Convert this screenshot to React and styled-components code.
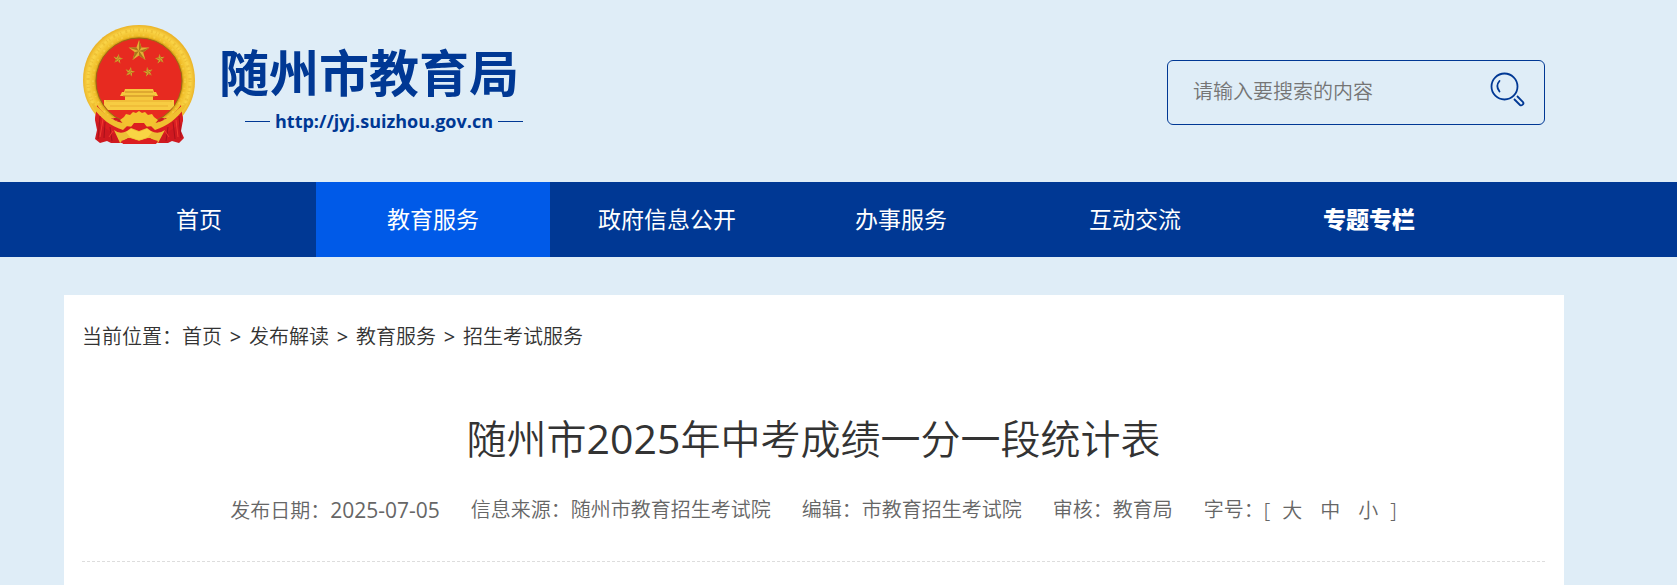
import React from "react";
import styled, { createGlobalStyle } from "styled-components";

const navy = "#003894";

const GlobalStyle = createGlobalStyle`
  * { box-sizing: border-box; }
  body {
    margin: 0;
    background: #dfedf7;
    color: #333;
    font-family: "Noto Sans", "Noto Sans CJK SC", sans-serif;
    font-size: 20px;
    line-height: 30px;
  }
  #root { min-height: 100vh; display: flex; flex-direction: column; }
  a { color: inherit; text-decoration: none; }
`;

const Page = styled.div`
  flex: 1;
  display: flex;
  flex-direction: column;
`;

const Container = styled.div`
  width: 100%;
  max-width: 1500px;
  margin: 0 auto;
  padding: 0 19px 0 18px;
`;

const Band = styled.div`
  padding-right: 49px;
  background: ${(p) => p.$fill || "transparent"};
`;

const HeaderRow = styled(Container)`
  height: 182px;
  display: flex;
  align-items: flex-start;
  justify-content: space-between;
`;

const Brand = styled.a`
  display: flex;
  gap: 22px;
  padding-top: 25px;
  color: ${navy};
`;

const BrandText = styled.div`
  padding-top: 18px;
`;

const SiteName = styled.div`
  font-size: 50px;
  font-weight: 700;
  line-height: 60px;
  white-space: nowrap;
`;

const SiteUrl = styled.div`
  display: flex;
  align-items: center;
  gap: 5px;
  padding-left: 26px;
  font-family: "Open Sans", sans-serif;
  font-size: 18px;
  font-weight: 700;
  line-height: 36px;

  &::before, &::after {
    content: "";
    width: 25px;
    height: 1px;
    background: ${navy};
  }
`;

const Search = styled.form`
  width: 378px;
  height: 65px;
  margin-top: 60px;
  padding: 0 18px 0 25px;
  display: flex;
  align-items: center;
  border: 1px solid ${navy};
  border-radius: 6px;
`;

const SearchInput = styled.input`
  flex: 1;
  min-width: 0;
  padding: 0 0 2px;
  border: 0;
  outline: 0;
  background: none;
  font: inherit;
  font-weight: 350;
  &::placeholder { color: #757575; opacity: 1; }
`;

const SearchButton = styled.button`
  padding: 0 0 6px;
  border: 0;
  background: none;
  cursor: pointer;
  svg { display: block; }
`;

const NavRow = styled(Container)`
  display: flex;
`;

const NavLink = styled.a`
  flex: 0 1 234px;
  line-height: 75px;
  font-size: 23px;
  font-weight: ${(p) => (p.$bold ? 900 : 400)};
  text-align: center;
  color: #fff;
  background: ${(p) => (p.$active ? "#005ae8" : "transparent")};
`;

const Main = styled(Band)`
  flex: 1;
  display: flex;
  padding-top: 38px;
`;

const Card = styled(Container)`
  background: #fff;
`;

const Breadcrumb = styled.nav`
  display: flex;
  padding-top: 27px;
  font-weight: 350;
`;

const Separator = styled.span`
  width: 27px;
  text-align: center;
  font-weight: 400;
`;

const Title = styled.h1`
  margin: 58px 0 0;
  font-size: 40px;
  font-weight: 350;
  line-height: 56px;
  text-align: center;
`;

const Digits = styled.span`
  font-family: "Open Sans", sans-serif;
  font-size: 41px;
  font-weight: 400;
`;

const Meta = styled.div`
  display: flex;
  flex-wrap: wrap;
  justify-content: center;
  column-gap: 31px;
  padding: 28px 0 35px;
  border-bottom: 1px dashed #ddd;
  color: #666;
  font-weight: 350;
`;

const DateText = styled.time`
  font-family: "Open Sans", sans-serif;
  font-size: 21px;
  font-weight: 400;
`;

const Sizes = styled.span`
  display: flex;
`;

const SizeList = styled.span`
  display: flex;
  gap: 18px;
  padding: 0 12px;
`;

const SizeButton = styled.button`
  padding: 0;
  border: 0;
  background: none;
  font: inherit;
  color: inherit;
  cursor: pointer;
`;

function Star({ x, y, r, turn = 0 }) {
  const at = (i) => {
    const a = (Math.PI / 5) * i - Math.PI / 2 + turn;
    const d = i % 2 ? r * 0.4 : r;
    return [x + d * Math.cos(a), y + d * Math.sin(a)];
  };
  const pts = Array.from({ length: 10 }, (_, i) => at(i));
  return (
    <g>
      <polygon points={pts.map((p) => p.join()).join(" ")} fill="#e3b035" />
      {[0, 2, 4, 6, 8].map((i) => (
        <polygon key={i} points={`${x},${y} ${pts[i].join()} ${pts[i + 1].join()}`} fill="#a8761b" />
      ))}
    </g>
  );
}

function Emblem() {
  return (
    <svg width="115" height="120" viewBox="0 0 115 120" aria-label="国徽" role="img">
      <defs>
        <radialGradient id="gold" cx="57" cy="56" r="57" gradientUnits="userSpaceOnUse">
          <stop offset=".74" stopColor="#b98310" />
          <stop offset=".79" stopColor="#efbb26" />
          <stop offset=".9" stopColor="#fad548" />
          <stop offset="1" stopColor="#e8ae22" />
        </radialGradient>
      </defs>
      <path d="M15 82 L100 82 L101 95 L99 106 L102 113 L97 118 L90 116 L86 118 L29 118 L25 116 L18 118 L13 114 L15 105 L13 95Z" fill="#cf1920" />
      <path d="M57 0 C90 0 113 24 113 56 C113 72 107 83 99 93 L16 93 C7 82 1 71 1 55 C1 24 25 0 57 0Z" fill="url(#gold)" />
      <circle cx="57" cy="56" r="51" fill="none" stroke="#d89b16" strokeWidth="3" strokeDasharray="1 4 2 3 1 2" opacity=".3" />
      <circle cx="57" cy="56" r="46" fill="none" stroke="#ffe878" strokeWidth="2" strokeDasharray="2 5 1 3" opacity=".3" />
      <circle cx="57" cy="56" r="43" fill="#e72a20" stroke="#9b6913" strokeWidth="1" />
      <Star x={57} y={26} r={11} />
      <Star x={36} y={34} r={5} turn={0.15} />
      <Star x={78} y={34} r={5} turn={-0.15} />
      <Star x={48} y={47} r={5} turn={0.2} />
      <Star x={66} y={47} r={5} turn={-0.2} />
      <path d="M43 64 H71 L72 67 H42Z M40 67 H74 L76 71 H38Z M43 71 H71 V76 H43Z" fill="#f5c83e" />
      <path d="M43 67 H71 M41 71 H73" stroke="#c98a22" />
      <path d="M22 75 H92 V81 L88 85 H26 L22 80Z" fill="#f7cc42" />
      <path d="M24 76 H90 M28 81 H86" stroke="#e9b030" />
      <path d="M15 80 C23 92 35 99 46 101 L57 99 L68 101 C79 99 91 92 99 80 L101 96 C93 103 83 110 73 112 L41 112 C29 109 20 101 13 94Z" fill="#d91d20" />
      <path d="M9 78 C18 82 18 86 25 90 C32 96 38 98 47 99 L41 105 C28 101 19 93 12 84Z M105 78 C96 82 96 86 89 90 C82 96 76 98 67 99 L73 105 C86 101 95 93 102 84Z" fill="#f0bf30" />
      <path d="M38 95 L42 92 L44 89 L48 90 L51 87 L54 88 L57 86 L60 88 L63 87 L66 90 L70 89 L72 92 L76 95 L71 101 L62 102 L57 98 L52 102 L43 101Z" fill="#f3c22f" />
      <path d="M32 105 Q38 110 45 106 L49 103 L57 106 L65 103 L69 106 Q76 110 83 105 L76 118 L68 113 L57 116 L46 113 L38 118Z" fill="#edc036" />
      <path d="M44 107 L49 104 L57 107 L65 104 L70 107 L66 112 L57 115 L48 112Z" fill="#f9d544" />
      <path d="M52 98 H62 L65 102 L57 105 L49 102Z M39 116 L48 113 L57 116 L66 113 L76 116 L74 119 H41Z" fill="#dc1e20" />
      <path d="M18 91 L16 114 M23 97 L22 113 M28 102 L30 116 M97 91 L99 113 M91 97 L93 114 M86 102 L84 116" stroke="#980f19" opacity=".7" />
      <path d="M21 94 L18 112 M94 95 L96 112 M31 106 L27 112 M83 106 L87 112" stroke="#f13a30" />
    </svg>
  );
}

function SearchIcon() {
  return (
    <svg width="36" height="36" viewBox="0 0 36 36" fill="none" stroke={navy} strokeWidth="1.8" aria-hidden="true">
      <circle cx="14.5" cy="14.5" r="13" />
      <path d="M9.5 9 C6.8 12 6.8 16 9.5 19.5" strokeLinecap="round" />
      <path d="M24 27 L30 33 C31.5 34.3 34.5 31.8 33 30 L27 24" />
    </svg>
  );
}

const navItems = [
  { label: "首页" },
  { label: "教育服务", active: true },
  { label: "政府信息公开" },
  { label: "办事服务" },
  { label: "互动交流" },
  { label: "专题专栏", bold: true },
];

const trail = ["首页", "发布解读", "教育服务", "招生考试服务"];

export default function App() {
  return (
    <Page>
      <GlobalStyle />
      <Band as="header">
        <HeaderRow>
          <Brand href="#">
            <Emblem />
            <BrandText>
              <SiteName>随州市教育局</SiteName>
              <SiteUrl>http://jyj.suizhou.gov.cn</SiteUrl>
            </BrandText>
          </Brand>
          <Search role="search" onSubmit={(e) => e.preventDefault()}>
            <SearchInput type="text" aria-label="搜索" placeholder="请输入要搜索的内容" />
            <SearchButton type="submit" aria-label="搜索">
              <SearchIcon />
            </SearchButton>
          </Search>
        </HeaderRow>
      </Band>
      <Band as="nav" $fill={navy}>
        <NavRow>
          {navItems.map((n) => (
            <NavLink key={n.label} href="#" $active={n.active} $bold={n.bold}>
              {n.label}
            </NavLink>
          ))}
        </NavRow>
      </Band>
      <Main as="main">
        <Card>
          <Breadcrumb aria-label="当前位置">
            <span>当前位置：</span>
            {trail.map((t, i) => (
              <React.Fragment key={t}>
                {i > 0 && <Separator>&gt;</Separator>}
                <a href="#">{t}</a>
              </React.Fragment>
            ))}
          </Breadcrumb>
          <Title>
            随州市<Digits>2025</Digits>年中考成绩一分一段统计表
          </Title>
          <Meta>
            <span>发布日期：<DateText>2025-07-05</DateText></span>
            <span>信息来源：随州市教育招生考试院</span>
            <span>编辑：市教育招生考试院</span>
            <span>审核：教育局</span>
            <Sizes>
              字号：[
              <SizeList>
                <SizeButton type="button">大</SizeButton>
                <SizeButton type="button">中</SizeButton>
                <SizeButton type="button">小</SizeButton>
              </SizeList>
              ]
            </Sizes>
          </Meta>
        </Card>
      </Main>
    </Page>
  );
}
